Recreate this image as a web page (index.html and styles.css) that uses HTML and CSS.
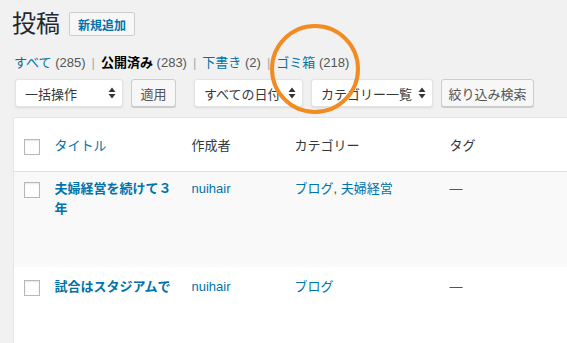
FILE: index.html
```html
<!DOCTYPE html>
<html lang="ja">
<head>
<meta charset="utf-8">
<link rel="stylesheet" href="styles.css">
</head>
<body>
<div class="wrap">
  <div class="page-head">
    <h1 class="page-title">投稿</h1>
    <a class="add-new">新規追加</a>
  </div>
  <ul class="subsubsub">
    <li><a class="link">すべて</a> <span class="count">(285)</span><span class="sep">|</span></li>
    <li><a class="current">公開済み</a> <span class="count">(283)</span><span class="sep">|</span></li>
    <li><a class="link">下書き</a> <span class="count">(2)</span><span class="sep">|</span></li>
    <li><a class="link">ゴミ箱</a> <span class="count">(218)</span></li>
  </ul>
  <div class="tablenav">
    <div class="select sel-bulk"><span>一括操作</span><svg class="arrows" width="8" height="12" viewBox="0 0 8 12"><path d="M4 0.5 L7.5 5 H0.5 Z M4 11.5 L7.5 7 H0.5 Z" fill="#32373c"/></svg></div>
    <button class="btn btn-apply">適用</button>
    <div class="select sel-date"><span>すべての日付</span><svg class="arrows" width="8" height="12" viewBox="0 0 8 12"><path d="M4 0.5 L7.5 5 H0.5 Z M4 11.5 L7.5 7 H0.5 Z" fill="#32373c"/></svg></div>
    <div class="select sel-cat"><span>カテゴリー一覧</span><svg class="arrows" width="8" height="12" viewBox="0 0 8 12"><path d="M4 0.5 L7.5 5 H0.5 Z M4 11.5 L7.5 7 H0.5 Z" fill="#32373c"/></svg></div>
    <button class="btn btn-filter">絞り込み検索</button>
  </div>
  <table class="posts">
    <colgroup>
      <col class="c-cb"><col class="c-title"><col class="c-author"><col class="c-cat"><col class="c-tags">
    </colgroup>
    <thead>
      <tr>
        <td class="cb"><span class="checkbox"></span></td>
        <th class="title-col"><a class="link">タイトル</a></th>
        <th>作成者</th>
        <th>カテゴリー</th>
        <th>タグ</th>
      </tr>
    </thead>
    <tbody>
      <tr class="alt row1">
        <td class="cb"><span class="checkbox"></span></td>
        <td class="title-col"><a class="row-title">夫婦経営を続けて３年</a></td>
        <td><a class="link">nuihair</a></td>
        <td><a class="link">ブログ</a>, <a class="link">夫婦経営</a></td>
        <td class="dash">—</td>
      </tr>
      <tr class="row2">
        <td class="cb"><span class="checkbox"></span></td>
        <td class="title-col"><a class="row-title">試合はスタジアムで</a></td>
        <td><a class="link">nuihair</a></td>
        <td><a class="link">ブログ</a></td>
        <td class="dash">—</td>
      </tr>
    </tbody>
  </table>
  <div class="highlight-circle"></div>
</div>
</body>
</html>
```
FILE: styles.css
```css
html, body {
  margin: 0;
  padding: 0;
  background: #f1f1f1;
  overflow: hidden;
}
body {
  width: 567px;
  height: 343px;
  font-family: "Liberation Sans", "Noto Sans CJK JP", sans-serif;
  font-size: 13px;
  color: #444;
}
.wrap {
  position: relative;
  padding-left: 13px;
}
.page-head {
  display: flex;
  align-items: center;
  gap: 9px;
  margin-top: 9px;
  height: 30px;
}
.page-title {
  margin: 0 0 0 -1px;
  font-size: 24px;
  font-weight: 400;
  line-height: 30px;
  color: #23282d;
}
.add-new {
  display: inline-flex;
  align-items: center;
  box-sizing: border-box;
  height: 24px;
  padding: 0 8px;
  border: 1px solid #ccc;
  border-radius: 2px;
  background: #f7f7f7;
  color: #0073aa;
  font-size: 12px;
  font-weight: 700;
}
.subsubsub {
  list-style: none;
  margin: 15px 0 0;
  padding: 0 0 0 1px;
  display: flex;
  height: 18px;
  line-height: 18px;
  font-size: 13px;
}
.subsubsub li {
  white-space: pre;
}
.link { color: #0073aa; }
.current { color: #000; font-weight: 700; }
.count { color: #555; }
.sep { color: #aaa; padding: 0 6px; }
.tablenav {
  display: flex;
  align-items: center;
  margin-top: 7px;
  margin-left: 2px;
  height: 28px;
}
.select {
  box-sizing: border-box;
  height: 28px;
  display: flex;
  align-items: center;
  justify-content: space-between;
  padding: 0 6px 0 9px;
  background: #fff;
  border: 1px solid #e4e4e4;
  border-radius: 3px;
  box-shadow: 0 1px 2px rgba(0,0,0,.1);
  color: #32373c;
  font-size: 13px;
  white-space: nowrap;
}
.sel-bulk { width: 108px; }
.sel-date { width: 109px; margin-left: 18px; }
.sel-cat { width: 122px; margin-left: 8px; }
.btn {
  box-sizing: border-box;
  height: 28px;
  padding: 0 10px;
  border: 1px solid #ccc;
  border-radius: 3px;
  background: #f7f7f7;
  box-shadow: 0 1px 0 #ccc;
  color: #555;
  font-family: inherit;
  font-size: 13px;
}
.btn-apply { width: 45px; margin-left: 8px; padding: 0; }
.btn-filter { width: 93px; margin-left: 8px; padding: 0; }
.posts {
  margin-top: 10px;
  width: 620px;
  border-collapse: collapse;
  table-layout: fixed;
  background: #fff;
  border: 1px solid #e5e5e5;
}
.c-cb { width: 31px; }
.c-title { width: 137px; }
.c-author { width: 103px; }
.c-cat { width: 155px; }
.posts th, .posts td {
  text-align: left;
  vertical-align: top;
  font-weight: 400;
  line-height: 20px;
  padding: 0 10px;
}
.posts .title-col { padding-right: 0; }
.posts thead tr { height: 54px; }
.posts thead th, .posts thead td {
  padding-top: 18px;
  color: #32373c;
  border-bottom: 1px solid #e1e1e1;
}
.posts thead .link { color: #0073aa; }
.posts .cb { padding: 0 0 0 10px; }
.posts thead .cb { padding-top: 21px; }
.checkbox {
  display: block;
  box-sizing: border-box;
  width: 16px;
  height: 16px;
  background: #fff;
  border: 1px solid #b4b9be;
  box-shadow: inset 0 1px 2px rgba(0,0,0,.1);
}
.row1 { height: 95px; }
.row1 td { padding-top: 7px; }
.row1 .cb { padding-top: 10px; }
.row2 td { padding-top: 10px; height: 70px; }
.row2 .cb { padding-top: 13px; }
.alt { background: #f9f9f9; }
.row-title {
  color: #0073aa;
  font-weight: 700;
}
.dash { color: #555; }
.highlight-circle {
  position: absolute;
  left: 270px;
  top: 15px;
  width: 90px;
  height: 90px;
  box-sizing: border-box;
  border: 4px solid #f28b22;
  border-radius: 50%;
}
```
